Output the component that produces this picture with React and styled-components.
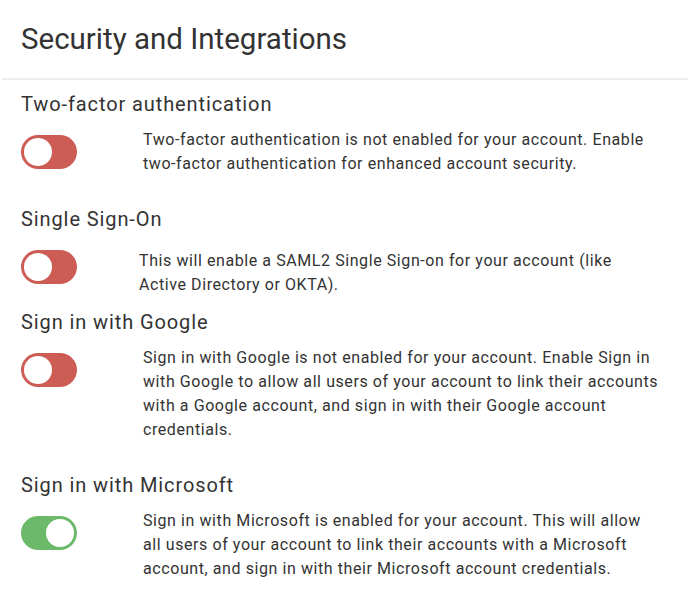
import React, { useState } from "react";
import styled, { createGlobalStyle } from "styled-components";

const GlobalStyle = createGlobalStyle`
  html, body { margin: 0; padding: 0; background: #ffffff; }
  body {
    font-family: Roboto, "Noto Sans", "Liberation Sans", sans-serif;
    color: #333333;
    -webkit-font-smoothing: antialiased;
  }
  * { box-sizing: border-box; }
`;

const Page = styled.div`
  width: 688px;
  padding-left: 2px;
`;

const Header = styled.header`
  padding: 21px 19px 21px;
  border-bottom: 2px solid #ededed;
`;

const Title = styled.h1`
  margin: 0;
  font-size: 29.5px;
  line-height: 36px;
  font-weight: 400;
  color: #333333;
`;

const Content = styled.div`
  padding: 12px 29px 0 19px;
`;

const Section = styled.section`
  display: flex;
  flex-direction: column;
`;

const SectionTitle = styled.h2`
  margin: 0;
  font-size: 20px;
  line-height: 24px;
  font-weight: 400;
  letter-spacing: 0.9px;
  color: #333333;
`;

const Row = styled.div`
  display: flex;
  align-items: flex-start;
  margin-top: 12px;
`;

const SwitchTrack = styled.button`
  flex: 0 0 auto;
  position: relative;
  width: 56px;
  height: 34px;
  margin-top: 7px;
  padding: 0;
  border: none;
  border-radius: 17px;
  background: ${(p) => (p.$on ? "#6cb96a" : "#cd5c55")};
  cursor: pointer;
`;

const Knob = styled.span`
  position: absolute;
  top: 3px;
  left: ${(p) => (p.$on ? "25px" : "3px")};
  width: 28px;
  height: 28px;
  border-radius: 50%;
  background: #ffffff;
`;

const Description = styled.p`
  flex: 1;
  margin: ${(p) => (p.$compact ? "6px 0 13px 62px" : "0 0 31px 66px")};
  font-size: 16px;
  line-height: 24px;
  letter-spacing: 0.58px;
  color: #333333;
`;

function Switch({ on, onToggle }) {
  return (
    <SwitchTrack type="button" role="switch" aria-checked={on} $on={on} onClick={onToggle}>
      <Knob $on={on} />
    </SwitchTrack>
  );
}

const initial = [
  {
    id: "tfa",
    title: "Two-factor authentication",
    on: false,
    text: "Two-factor authentication is not enabled for your account. Enable two-factor authentication for enhanced account security.",
  },
  {
    id: "sso",
    title: "Single Sign-On",
    on: false,
    compact: true,
    text: "This will enable a SAML2 Single Sign-on for your account (like Active Directory or OKTA).",
  },
  {
    id: "google",
    title: "Sign in with Google",
    on: false,
    text: "Sign in with Google is not enabled for your account. Enable Sign in with Google to allow all users of your account to link their accounts with a Google account, and sign in with their Google account credentials.",
  },
  {
    id: "microsoft",
    title: "Sign in with Microsoft",
    on: true,
    text: "Sign in with Microsoft is enabled for your account. This will allow all users of your account to link their accounts with a Microsoft account, and sign in with their Microsoft account credentials.",
  },
];

export default function App() {
  const [items, setItems] = useState(initial);
  const toggle = (id) =>
    setItems((list) => list.map((it) => (it.id === id ? { ...it, on: !it.on } : it)));

  return (
    <>
      <GlobalStyle />
      <Page>
        <Header>
          <Title>Security and Integrations</Title>
        </Header>
        <Content>
          {items.map((it) => (
            <Section key={it.id}>
              <SectionTitle>{it.title}</SectionTitle>
              <Row>
                <Switch on={it.on} onToggle={() => toggle(it.id)} />
                <Description $compact={it.compact}>{it.text}</Description>
              </Row>
            </Section>
          ))}
        </Content>
      </Page>
    </>
  );
}
